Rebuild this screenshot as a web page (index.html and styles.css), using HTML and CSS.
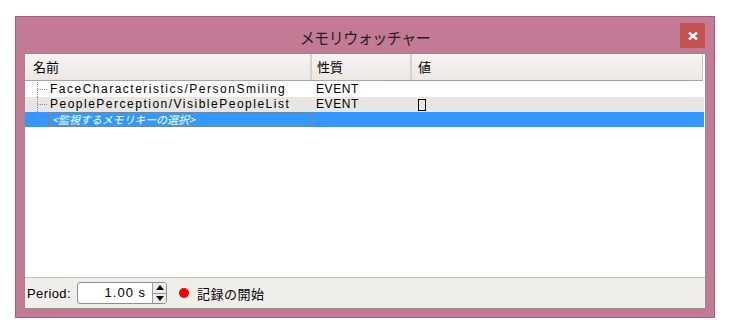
FILE: index.html
```html
<!DOCTYPE html>
<html lang="ja">
<head>
<meta charset="utf-8">
<link rel="stylesheet" href="styles.css">
</head>
<body>
<div class="window">
  <div class="titlebar">
    <div class="title">メモリウォッチャー</div>
    <button class="close" aria-label="close">
      <svg width="10" height="8" viewBox="0 0 10 8"><path d="M1 0.5 L9 7.5 M9 0.5 L1 7.5" stroke="#fff" stroke-width="2.4"/></svg>
    </button>
  </div>
  <div class="panel">
    <div class="header">
      <div class="hcell c1">名前</div>
      <div class="hcell c2">性質</div>
      <div class="hcell c3">値</div>
    </div>
    <div class="list">
      <div class="row white">
        <div class="cell c1"><span class="tree"></span><span class="name">FaceCharacteristics/PersonSmiling</span></div>
        <div class="cell c2">EVENT</div>
        <div class="cell c3"></div>
      </div>
      <div class="row gray">
        <div class="cell c1"><span class="tree"></span><span class="name">PeoplePerception/VisiblePeopleList</span></div>
        <div class="cell c2">EVENT</div>
        <div class="cell c3"><span class="box"></span></div>
      </div>
      <div class="row sel">
        <div class="cell c1"><span class="tree last"></span><span class="name focus">&lt;監視するメモリキーの選択&gt;</span></div>
        <div class="cell c2"></div>
        <div class="cell c3"></div>
      </div>
    </div>
    <div class="footer">
      <span class="plabel">Period:</span>
      <div class="spin">
        <div class="spin-val">1.00 s</div>
        <div class="spin-btns">
          <div class="sb up"><span class="tri-up"></span></div>
          <div class="sb down"><span class="tri-down"></span></div>
        </div>
      </div>
      <span class="rec-dot"></span>
      <span class="rec-label">記録の開始</span>
    </div>
  </div>
</div>
</body>
</html>
```

FILE: styles.css
```css
* { box-sizing: border-box; }
html, body { margin: 0; padding: 0; background: #ffffff; }
body {
  font-family: "Noto Sans CJK JP", "Noto Sans", sans-serif;
  color: #000;
}
.window {
  margin: 16px 0 0 15px;
  width: 700px;
  height: 302px;
  background: #c27a95;
  border: 1px solid #a0607c;
  display: flex;
  flex-direction: column;
  padding: 0 8px 8px 8px;
}
.titlebar {
  height: 36px;
  flex: none;
  display: flex;
  align-items: center;
  justify-content: center;
  position: relative;
}
.title {
  font-size: 15px;
  color: #222;
  padding-top: 3px;
  letter-spacing: -0.5px;
  transform: scaleY(1.08);
}
.close {
  position: absolute;
  right: 1px;
  top: 6px;
  width: 25px;
  height: 25px;
  background: #c75050;
  border: none;
  padding: 0;
  display: flex;
  align-items: center;
  justify-content: center;
}
.panel {
  flex: 1;
  background: #ffffff;
  border: 1px solid #9a8a90;
  display: flex;
  flex-direction: column;
}
.header {
  height: 27px;
  flex: none;
  display: flex;
  background: linear-gradient(#f6f5f3, #ebe8e4);
  border-bottom: 1px solid #a9a49d;
  margin-right: 2px;
  border-right: 1px solid #c8c4be;
}
.hcell {
  font-size: 13px;
  line-height: 26px;
  border-right: 2px solid #d6d2cc;
}
.c1 { width: 287px; flex: none; }
.c2 { width: 100px; flex: none; }
.c3 { width: 250px; flex: none; }
.hcell.c1 { padding-left: 8px; }
.hcell.c2 { padding-left: 5px; }
.hcell.c3 { padding-left: 6px; flex: 1; border-right: none; }
.list {
  flex: 1;
  padding-top: 1px;
}
.row {
  height: 15px;
  display: flex;
  font-family: "Liberation Sans", "Noto Sans CJK JP", sans-serif;
  font-size: 12px;
  line-height: 15px;
  margin-right: 1px;
}
.row.white { background: #ffffff; }
.row.gray { background: #e8e6e2; }
.row.sel { background: #3399ff; color: #fff; }
.cell { white-space: nowrap; overflow: visible; }
.cell.c1 { display: flex; align-items: stretch; padding-left: 12px; }
.cell.c2 { padding-left: 4px; letter-spacing: 0.6px; }
.cell.c3 { padding-left: 6px; }
.tree {
  width: 11px;
  flex: none;
  border-left: 1px dotted #8a8a8a;
  position: relative;
}
.tree.last { height: 8px; }
.tree::after {
  content: "";
  position: absolute;
  left: 0;
  top: 7px;
  width: 9px;
  border-top: 1px dotted #8a8a8a;
}
.name {
  padding-left: 2px;
  letter-spacing: 1.5px;
}
.name.focus {
  font-family: "Noto Sans CJK JP", sans-serif;
  font-style: italic;
  width: 264px;
  border: 1px dotted #9a7a5a;
  padding-left: 3px;
  letter-spacing: -0.1px;
  font-size: 11px;
  line-height: 13px;
}
.box {
  display: inline-block;
  width: 8px;
  height: 12px;
  border: 1px solid #000;
  margin-top: 2px;
  vertical-align: top;
}
.footer {
  height: 31px;
  flex: none;
  background: #f0eeeb;
  border-top: 1px solid #c4c0ba;
  display: flex;
  align-items: center;
  padding-left: 2px;
  font-size: 13px;
}
.plabel {
  width: 50px;
  font-family: "Liberation Sans", sans-serif;
  letter-spacing: 0.4px;
}
.spin {
  display: flex;
  width: 90px;
  height: 22px;
  border: 1px solid #8f8f8f;
  border-radius: 3px;
  background: #fff;
  overflow: hidden;
}
.spin-val {
  flex: 1;
  text-align: right;
  padding-right: 6px;
  line-height: 20px;
  font-family: "Liberation Sans", sans-serif;
  font-size: 13px;
  letter-spacing: 1px;
}
.spin-btns {
  width: 14px;
  display: flex;
  flex-direction: column;
  border-left: 1px solid #9a9a9a;
  background: #ecebe8;
}
.sb {
  flex: 1;
  display: flex;
  align-items: center;
  justify-content: center;
}
.sb.up { border-bottom: 1px solid #9a9a9a; }
.tri-up {
  width: 0; height: 0;
  border-left: 4px solid transparent;
  border-right: 4px solid transparent;
  border-bottom: 5px solid #000;
}
.tri-down {
  width: 0; height: 0;
  border-left: 4px solid transparent;
  border-right: 4px solid transparent;
  border-top: 5px solid #000;
}
.rec-dot {
  width: 10px;
  height: 10px;
  border-radius: 50%;
  background: #ee0000;
  margin-left: 12px;
}
.rec-label {
  margin-left: 8px;
  font-size: 13px;
  letter-spacing: 0.5px;
}
```
